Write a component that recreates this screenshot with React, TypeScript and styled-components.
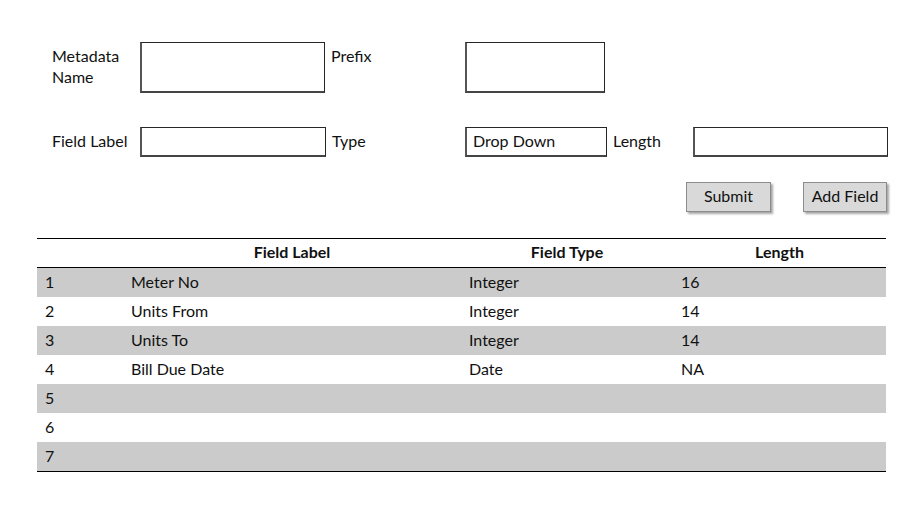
import styled, { createGlobalStyle } from "styled-components";

const GlobalStyle = createGlobalStyle`
  html, body {
    margin: 0;
    padding: 0;
    background: #ffffff;
  }
  body {
    font-family: Lato, "Open Sans", "Liberation Sans", sans-serif;
    font-size: 16px;
    color: #111111;
  }
`;

const Page = styled.div`
  width: 921px;
  height: 507px;
  padding-top: 42px;
  box-sizing: border-box;
`;

const Form = styled.div`
  display: grid;
  grid-template-columns: 88px 186px 139px 142px 86px 195px;
  grid-template-rows: 51px 30px;
  row-gap: 34px;
  margin-left: 52px;
`;

const Label = styled.div<{ $top?: boolean; $pad?: number }>`
  display: flex;
  align-items: ${(p) => (p.$top ? "flex-start" : "center")};
  padding-top: ${(p) => (p.$top ? 3 : 0)}px;
  padding-bottom: ${(p) => (p.$top ? 0 : 3)}px;
  padding-left: ${(p) => p.$pad ?? 0}px;
  line-height: 21px;
  font-size: 16px;
`;

const Box = styled.div<{ $w?: number }>`
  box-sizing: border-box;
  width: ${(p) => (p.$w ? `${p.$w}px` : "100%")};
  height: 100%;
  border: 1px solid #262626;
  border-left-width: 2px;
  border-bottom-width: 2px;
  border-left-color: #555;
  border-bottom-color: #444;
  background: #fff;
  display: flex;
  align-items: center;
  padding: 0 0 2px 6px;
  font-size: 16px;
`;

const Actions = styled.div`
  display: flex;
  justify-content: flex-end;
  gap: 32px;
  width: 887px;
  margin-top: 25px;
`;

const Button = styled.div<{ $w: number }>`
  width: ${(p) => p.$w}px;
  height: 30px;
  box-sizing: border-box;
  background: #d9d9d9;
  border: 1px solid #8c8c8c;
  box-shadow: 2px 2px 2px rgba(0, 0, 0, 0.35);
  display: flex;
  align-items: center;
  justify-content: center;
  padding-bottom: 3px;
  font-size: 16px;
`;

const Table = styled.div`
  margin: 26px 0 0 37px;
  width: 849px;
  border-top: 1px solid #000;
  border-bottom: 1px solid #000;
`;

const Row = styled.div<{ $shade?: boolean; $head?: boolean }>`
  display: grid;
  grid-template-columns: 86px 338px 212px 213px;
  height: 29px;
  box-sizing: border-box;
  padding-bottom: 3px;
  align-items: center;
  background: ${(p) => (p.$shade ? "#cbcbcb" : "transparent")};
  border-bottom: ${(p) => (p.$head ? "1px solid #000" : "none")};
  font-size: 16px;
`;

const Cell = styled.div<{ $head?: boolean }>`
  padding-left: ${(p) => (p.$head ? 0 : 8)}px;
  text-align: ${(p) => (p.$head ? "center" : "left")};
  font-weight: ${(p) => (p.$head ? 700 : 400)};
  white-space: nowrap;
`;

const rows = [
  ["1", "Meter No", "Integer", "16"],
  ["2", "Units From", "Integer", "14"],
  ["3", "Units To", "Integer", "14"],
  ["4", "Bill Due Date", "Date", "NA"],
  ["5", "", "", ""],
  ["6", "", "", ""],
  ["7", "", "", ""],
];

export default function App() {
  return (
    <Page>
      <GlobalStyle />
      <Form>
        <Label $top>
          Metadata
          <br />
          Name
        </Label>
        <Box $w={185} />
        <Label $top $pad={5}>
          Prefix
        </Label>
        <Box $w={140} />
        <div />
        <div />

        <Label>Field Label</Label>
        <Box />
        <Label $pad={6}>Type</Label>
        <Box>Drop Down</Box>
        <Label $pad={6}>Length</Label>
        <Box />
      </Form>

      <Actions>
        <Button $w={85}>Submit</Button>
        <Button $w={84}>Add Field</Button>
      </Actions>

      <Table>
        <Row $head>
          <Cell $head />
          <Cell $head>Field Label</Cell>
          <Cell $head>Field Type</Cell>
          <Cell $head>Length</Cell>
        </Row>
        {rows.map((r, i) => (
          <Row key={r[0]} $shade={i % 2 === 0}>
            {r.map((c, j) => (
              <Cell key={j}>{c}</Cell>
            ))}
          </Row>
        ))}
      </Table>
    </Page>
  );
}
